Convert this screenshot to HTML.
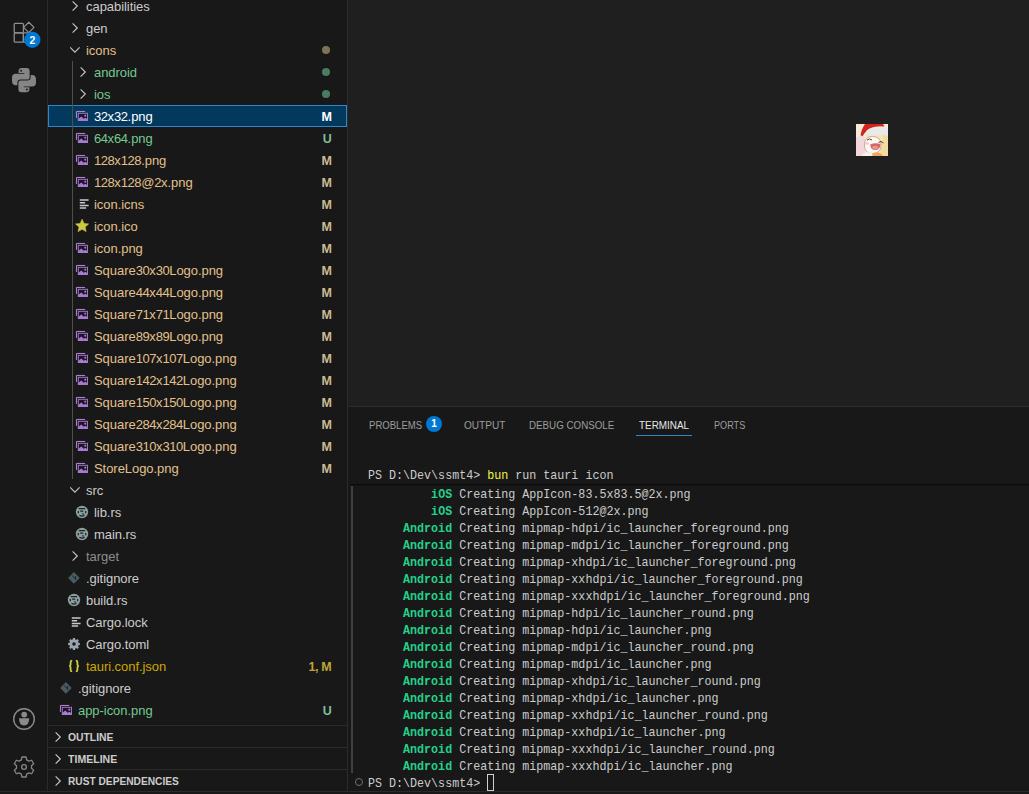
<!DOCTYPE html>
<html><head><meta charset="utf-8"><style>
*{box-sizing:border-box}
html,body{margin:0;padding:0}
body{width:1029px;height:794px;overflow:hidden;background:#181818;position:relative;font-family:"Liberation Sans",sans-serif;}
.abs{position:absolute}
#act{position:absolute;left:0;top:0;width:48px;height:791px;background:#181818;border-right:1px solid #2b2b2b}
#side{position:absolute;left:48px;top:0;width:300px;height:791px;background:#181818;border-right:1px solid #2b2b2b;overflow:hidden}
#editor{position:absolute;left:348px;top:0;width:681px;height:406px;background:#1f1f1f}
#panel{position:absolute;left:348px;top:406px;width:681px;height:385px;background:#181818;border-top:1px solid #2b2b2b;overflow:hidden}
#status{position:absolute;left:0;top:791px;width:1029px;height:3px;background:#181818;border-top:1px solid #2b2b2b}
.row{position:absolute;left:0;width:299px;height:22px}
.row.sel{background:#04395e;outline:1px solid #2f86c9;outline-offset:-1px}
.ic{position:absolute;display:block;line-height:0}
.lb{position:absolute;top:1px;line-height:22px;font-size:13px;letter-spacing:-0.05px;white-space:nowrap}
.lb i{font-style:normal;letter-spacing:-0.45px}
.bd{position:absolute;right:15.5px;top:1px;line-height:22px;font-size:12.5px;font-weight:bold;white-space:nowrap;letter-spacing:-0.3px}
.dot{position:absolute;left:274px;top:7px;width:8px;height:8px;border-radius:50%}
.guide{position:absolute;left:24px;width:1px;background:#4e4e4e}
.sec{position:absolute;left:0;width:299px;height:22px;border-top:1px solid #2b2b2b}
.sec span{position:absolute;left:20px;top:1px;line-height:21px;font-size:11px;font-weight:bold;color:#cccccc;transform-origin:0 0}
.sec svg{position:absolute;left:3px;top:3px}
.tab{position:absolute;transform-origin:0 0;top:411px;line-height:28px;font-size:11px;color:#9d9d9d;white-space:nowrap}
.tl{position:absolute;left:368px;height:17px;line-height:17px;font-family:"Liberation Mono",monospace;font-size:13.5px;transform:scaleX(0.8655);transform-origin:0 0;color:#cccccc;white-space:pre}
.tl b{color:#23d18b}
</style></head><body>
<div id="act">
 <svg class="abs" style="left:0;top:0" width="48" height="100" viewBox="0 0 48 100">
  <g fill="none" stroke="#8f8f8f" stroke-width="1.25" stroke-linejoin="round">
   <rect x="14.2" y="23.4" width="9.2" height="9.4" rx="1"/>
   <rect x="14.2" y="32.8" width="9.2" height="9.4" rx="1"/>
   <rect x="23.4" y="32.8" width="9.2" height="9.4" rx="1"/>
   <path d="M28.8 22.2L34 27.4L28.8 32.6L23.6 27.4Z"/>
  </g>
  <circle cx="32.3" cy="39.8" r="8.1" fill="#0078d4"/>
  <text x="32.3" y="44" font-family="Liberation Sans" font-weight="bold" font-size="10.5" fill="#ffffff" text-anchor="middle">2</text>
  <g fill="#858585">
   <path d="M21.6 68H26.6Q29.6 68 29.6 71V77.4Q29.6 79.6 27.4 79.6H20.5Q17.4 79.6 17.4 82.6V85.3H15.8Q12 85.3 12 80.5V77.8Q12 73.8 15.8 73.8H24.3V73H18.6V71Q18.6 68 21.6 68Z"/>
   <path d="M21.6 68H26.6Q29.6 68 29.6 71V77.4Q29.6 79.6 27.4 79.6H20.5Q17.4 79.6 17.4 82.6V85.3H15.8Q12 85.3 12 80.5V77.8Q12 73.8 15.8 73.8H24.3V73H18.6V71Q18.6 68 21.6 68Z" transform="rotate(180 24 80.1)"/>
  </g>
  <circle cx="21.1" cy="70.7" r="0.95" fill="#181818"/>
  <circle cx="26.9" cy="89.5" r="0.95" fill="#181818"/>
 </svg>
 <svg class="abs" style="left:0;top:690px" width="48" height="100" viewBox="0 690 48 100">
  <circle cx="24" cy="719" r="10.3" fill="none" stroke="#8a8a8a" stroke-width="1.4"/>
  <circle cx="24.2" cy="714.6" r="2.9" fill="#8a8a8a"/>
  <path d="M19 718.3H29.2Q29.2 725.4 24.1 725.4Q19 725.4 19 718.3Z" fill="#8a8a8a"/>
  <path d="M21.32 759.89 L21.97 757.00 L26.03 757.00 L26.68 759.89 L28.82 761.12 L31.64 760.25 L33.67 763.76 L31.50 765.76 L31.50 768.24 L33.67 770.24 L31.64 773.75 L28.82 772.88 L26.68 774.11 L26.03 777.00 L21.97 777.00 L21.32 774.11 L19.18 772.88 L16.36 773.75 L14.33 770.24 L16.50 768.24 L16.50 765.76 L14.33 763.76 L16.36 760.25 L19.18 761.12Z" fill="none" stroke="#858585" stroke-width="1.3" stroke-linejoin="round"/>
  <circle cx="24" cy="767" r="2.4" fill="none" stroke="#858585" stroke-width="1.3"/>
 </svg>
</div>
<div id="side">
<div class="row" style="top:-5px"><span class="ic" style="left:18px;top:3px"><svg width="16" height="16" viewBox="0 0 16 16"><path d="M6.6 3.3L11.3 8L6.6 12.7" fill="none" stroke="#c5c5c5" stroke-width="1.15"/></svg></span><span class="lb" style="left:38px;color:#cccccc">capabilities</span></div>
<div class="row" style="top:17px"><span class="ic" style="left:18px;top:3px"><svg width="16" height="16" viewBox="0 0 16 16"><path d="M6.6 3.3L11.3 8L6.6 12.7" fill="none" stroke="#c5c5c5" stroke-width="1.15"/></svg></span><span class="lb" style="left:38px;color:#cccccc">gen</span></div>
<div class="row" style="top:39px"><span class="ic" style="left:18px;top:3px"><svg width="16" height="16" viewBox="0 0 16 16"><path d="M4.2 5.4L8.9 10.1L13.6 5.4" fill="none" stroke="#c5c5c5" stroke-width="1.15"/></svg></span><span class="lb" style="left:38px;color:#e2c08d">icons</span><span class="dot" style="background:#7d7458"></span></div>
<div class="row" style="top:61px"><span class="ic" style="left:26px;top:3px"><svg width="16" height="16" viewBox="0 0 16 16"><path d="M6.6 3.3L11.3 8L6.6 12.7" fill="none" stroke="#c5c5c5" stroke-width="1.15"/></svg></span><span class="lb" style="left:46px;color:#73c991">android</span><span class="dot" style="background:#4b7c62"></span></div>
<div class="row" style="top:83px"><span class="ic" style="left:26px;top:3px"><svg width="16" height="16" viewBox="0 0 16 16"><path d="M6.6 3.3L11.3 8L6.6 12.7" fill="none" stroke="#c5c5c5" stroke-width="1.15"/></svg></span><span class="lb" style="left:46px;color:#73c991">ios</span><span class="dot" style="background:#4b7c62"></span></div>
<div class="row sel" style="top:105px"><span class="ic" style="left:26px;top:3px"><svg width="16" height="16" viewBox="0 0 16 16"><path d="M2.45 9.9V3.45H11.1" fill="none" stroke="#b48ad8" stroke-width="1"/><rect x="4.3" y="5.3" width="9.2" height="7.1" fill="#1e1628" stroke="#a074c4" stroke-width="1"/><path d="M4 12.9V11.2L7.3 8.6L9.8 10.8L11.5 9.7L13.8 11.5V12.9Z" fill="#a57ad0"/><circle cx="11.3" cy="7.7" r="1.1" fill="#a074c4"/></svg></span><span class="lb" style="left:46px;color:#ffffff"><i>32</i>x<i>32</i>.png</span><span class="bd" style="color:#ffffff">M</span></div>
<div class="row" style="top:127px"><span class="ic" style="left:26px;top:3px"><svg width="16" height="16" viewBox="0 0 16 16"><path d="M2.45 9.9V3.45H11.1" fill="none" stroke="#b48ad8" stroke-width="1"/><rect x="4.3" y="5.3" width="9.2" height="7.1" fill="#1e1628" stroke="#a074c4" stroke-width="1"/><path d="M4 12.9V11.2L7.3 8.6L9.8 10.8L11.5 9.7L13.8 11.5V12.9Z" fill="#a57ad0"/><circle cx="11.3" cy="7.7" r="1.1" fill="#a074c4"/></svg></span><span class="lb" style="left:46px;color:#73c991"><i>64</i>x<i>64</i>.png</span><span class="bd" style="color:#7fbf98">U</span></div>
<div class="row" style="top:149px"><span class="ic" style="left:26px;top:3px"><svg width="16" height="16" viewBox="0 0 16 16"><path d="M2.45 9.9V3.45H11.1" fill="none" stroke="#b48ad8" stroke-width="1"/><rect x="4.3" y="5.3" width="9.2" height="7.1" fill="#1e1628" stroke="#a074c4" stroke-width="1"/><path d="M4 12.9V11.2L7.3 8.6L9.8 10.8L11.5 9.7L13.8 11.5V12.9Z" fill="#a57ad0"/><circle cx="11.3" cy="7.7" r="1.1" fill="#a074c4"/></svg></span><span class="lb" style="left:46px;color:#e2c08d"><i>128</i>x<i>128</i>.png</span><span class="bd" style="color:#cdbb90">M</span></div>
<div class="row" style="top:171px"><span class="ic" style="left:26px;top:3px"><svg width="16" height="16" viewBox="0 0 16 16"><path d="M2.45 9.9V3.45H11.1" fill="none" stroke="#b48ad8" stroke-width="1"/><rect x="4.3" y="5.3" width="9.2" height="7.1" fill="#1e1628" stroke="#a074c4" stroke-width="1"/><path d="M4 12.9V11.2L7.3 8.6L9.8 10.8L11.5 9.7L13.8 11.5V12.9Z" fill="#a57ad0"/><circle cx="11.3" cy="7.7" r="1.1" fill="#a074c4"/></svg></span><span class="lb" style="left:46px;color:#e2c08d"><i>128</i>x<i>128</i>@<i>2</i>x.png</span><span class="bd" style="color:#cdbb90">M</span></div>
<div class="row" style="top:193px"><span class="ic" style="left:26px;top:3px"><svg width="16" height="16" viewBox="0 0 16 16"><path d="M5.8 4H14.6M5.8 6.7H11.1M5.8 9.5H14.6M5.8 12H12.1" stroke="#c8c8c8" stroke-width="1.4"/></svg></span><span class="lb" style="left:46px;color:#e2c08d">icon.icns</span><span class="bd" style="color:#cdbb90">M</span></div>
<div class="row" style="top:215px"><span class="ic" style="left:26px;top:3px"><svg width="16" height="16" viewBox="0 0 16 16"><path d="M8.10 1.20 L9.98 5.46 L14.61 5.93 L11.14 9.04 L12.13 13.59 L8.10 11.25 L4.07 13.59 L5.06 9.04 L1.59 5.93 L6.22 5.46Z" fill="#cbcb41" stroke="#cbcb41" stroke-width="0.6" stroke-linejoin="round"/></svg></span><span class="lb" style="left:46px;color:#e2c08d">icon.ico</span><span class="bd" style="color:#cdbb90">M</span></div>
<div class="row" style="top:237px"><span class="ic" style="left:26px;top:3px"><svg width="16" height="16" viewBox="0 0 16 16"><path d="M2.45 9.9V3.45H11.1" fill="none" stroke="#b48ad8" stroke-width="1"/><rect x="4.3" y="5.3" width="9.2" height="7.1" fill="#1e1628" stroke="#a074c4" stroke-width="1"/><path d="M4 12.9V11.2L7.3 8.6L9.8 10.8L11.5 9.7L13.8 11.5V12.9Z" fill="#a57ad0"/><circle cx="11.3" cy="7.7" r="1.1" fill="#a074c4"/></svg></span><span class="lb" style="left:46px;color:#e2c08d">icon.png</span><span class="bd" style="color:#cdbb90">M</span></div>
<div class="row" style="top:259px"><span class="ic" style="left:26px;top:3px"><svg width="16" height="16" viewBox="0 0 16 16"><path d="M2.45 9.9V3.45H11.1" fill="none" stroke="#b48ad8" stroke-width="1"/><rect x="4.3" y="5.3" width="9.2" height="7.1" fill="#1e1628" stroke="#a074c4" stroke-width="1"/><path d="M4 12.9V11.2L7.3 8.6L9.8 10.8L11.5 9.7L13.8 11.5V12.9Z" fill="#a57ad0"/><circle cx="11.3" cy="7.7" r="1.1" fill="#a074c4"/></svg></span><span class="lb" style="left:46px;color:#e2c08d">Square<i>30</i>x<i>30</i>Logo.png</span><span class="bd" style="color:#cdbb90">M</span></div>
<div class="row" style="top:281px"><span class="ic" style="left:26px;top:3px"><svg width="16" height="16" viewBox="0 0 16 16"><path d="M2.45 9.9V3.45H11.1" fill="none" stroke="#b48ad8" stroke-width="1"/><rect x="4.3" y="5.3" width="9.2" height="7.1" fill="#1e1628" stroke="#a074c4" stroke-width="1"/><path d="M4 12.9V11.2L7.3 8.6L9.8 10.8L11.5 9.7L13.8 11.5V12.9Z" fill="#a57ad0"/><circle cx="11.3" cy="7.7" r="1.1" fill="#a074c4"/></svg></span><span class="lb" style="left:46px;color:#e2c08d">Square<i>44</i>x<i>44</i>Logo.png</span><span class="bd" style="color:#cdbb90">M</span></div>
<div class="row" style="top:303px"><span class="ic" style="left:26px;top:3px"><svg width="16" height="16" viewBox="0 0 16 16"><path d="M2.45 9.9V3.45H11.1" fill="none" stroke="#b48ad8" stroke-width="1"/><rect x="4.3" y="5.3" width="9.2" height="7.1" fill="#1e1628" stroke="#a074c4" stroke-width="1"/><path d="M4 12.9V11.2L7.3 8.6L9.8 10.8L11.5 9.7L13.8 11.5V12.9Z" fill="#a57ad0"/><circle cx="11.3" cy="7.7" r="1.1" fill="#a074c4"/></svg></span><span class="lb" style="left:46px;color:#e2c08d">Square<i>71</i>x<i>71</i>Logo.png</span><span class="bd" style="color:#cdbb90">M</span></div>
<div class="row" style="top:325px"><span class="ic" style="left:26px;top:3px"><svg width="16" height="16" viewBox="0 0 16 16"><path d="M2.45 9.9V3.45H11.1" fill="none" stroke="#b48ad8" stroke-width="1"/><rect x="4.3" y="5.3" width="9.2" height="7.1" fill="#1e1628" stroke="#a074c4" stroke-width="1"/><path d="M4 12.9V11.2L7.3 8.6L9.8 10.8L11.5 9.7L13.8 11.5V12.9Z" fill="#a57ad0"/><circle cx="11.3" cy="7.7" r="1.1" fill="#a074c4"/></svg></span><span class="lb" style="left:46px;color:#e2c08d">Square<i>89</i>x<i>89</i>Logo.png</span><span class="bd" style="color:#cdbb90">M</span></div>
<div class="row" style="top:347px"><span class="ic" style="left:26px;top:3px"><svg width="16" height="16" viewBox="0 0 16 16"><path d="M2.45 9.9V3.45H11.1" fill="none" stroke="#b48ad8" stroke-width="1"/><rect x="4.3" y="5.3" width="9.2" height="7.1" fill="#1e1628" stroke="#a074c4" stroke-width="1"/><path d="M4 12.9V11.2L7.3 8.6L9.8 10.8L11.5 9.7L13.8 11.5V12.9Z" fill="#a57ad0"/><circle cx="11.3" cy="7.7" r="1.1" fill="#a074c4"/></svg></span><span class="lb" style="left:46px;color:#e2c08d">Square<i>107</i>x<i>107</i>Logo.png</span><span class="bd" style="color:#cdbb90">M</span></div>
<div class="row" style="top:369px"><span class="ic" style="left:26px;top:3px"><svg width="16" height="16" viewBox="0 0 16 16"><path d="M2.45 9.9V3.45H11.1" fill="none" stroke="#b48ad8" stroke-width="1"/><rect x="4.3" y="5.3" width="9.2" height="7.1" fill="#1e1628" stroke="#a074c4" stroke-width="1"/><path d="M4 12.9V11.2L7.3 8.6L9.8 10.8L11.5 9.7L13.8 11.5V12.9Z" fill="#a57ad0"/><circle cx="11.3" cy="7.7" r="1.1" fill="#a074c4"/></svg></span><span class="lb" style="left:46px;color:#e2c08d">Square<i>142</i>x<i>142</i>Logo.png</span><span class="bd" style="color:#cdbb90">M</span></div>
<div class="row" style="top:391px"><span class="ic" style="left:26px;top:3px"><svg width="16" height="16" viewBox="0 0 16 16"><path d="M2.45 9.9V3.45H11.1" fill="none" stroke="#b48ad8" stroke-width="1"/><rect x="4.3" y="5.3" width="9.2" height="7.1" fill="#1e1628" stroke="#a074c4" stroke-width="1"/><path d="M4 12.9V11.2L7.3 8.6L9.8 10.8L11.5 9.7L13.8 11.5V12.9Z" fill="#a57ad0"/><circle cx="11.3" cy="7.7" r="1.1" fill="#a074c4"/></svg></span><span class="lb" style="left:46px;color:#e2c08d">Square<i>150</i>x<i>150</i>Logo.png</span><span class="bd" style="color:#cdbb90">M</span></div>
<div class="row" style="top:413px"><span class="ic" style="left:26px;top:3px"><svg width="16" height="16" viewBox="0 0 16 16"><path d="M2.45 9.9V3.45H11.1" fill="none" stroke="#b48ad8" stroke-width="1"/><rect x="4.3" y="5.3" width="9.2" height="7.1" fill="#1e1628" stroke="#a074c4" stroke-width="1"/><path d="M4 12.9V11.2L7.3 8.6L9.8 10.8L11.5 9.7L13.8 11.5V12.9Z" fill="#a57ad0"/><circle cx="11.3" cy="7.7" r="1.1" fill="#a074c4"/></svg></span><span class="lb" style="left:46px;color:#e2c08d">Square<i>284</i>x<i>284</i>Logo.png</span><span class="bd" style="color:#cdbb90">M</span></div>
<div class="row" style="top:435px"><span class="ic" style="left:26px;top:3px"><svg width="16" height="16" viewBox="0 0 16 16"><path d="M2.45 9.9V3.45H11.1" fill="none" stroke="#b48ad8" stroke-width="1"/><rect x="4.3" y="5.3" width="9.2" height="7.1" fill="#1e1628" stroke="#a074c4" stroke-width="1"/><path d="M4 12.9V11.2L7.3 8.6L9.8 10.8L11.5 9.7L13.8 11.5V12.9Z" fill="#a57ad0"/><circle cx="11.3" cy="7.7" r="1.1" fill="#a074c4"/></svg></span><span class="lb" style="left:46px;color:#e2c08d">Square<i>310</i>x<i>310</i>Logo.png</span><span class="bd" style="color:#cdbb90">M</span></div>
<div class="row" style="top:457px"><span class="ic" style="left:26px;top:3px"><svg width="16" height="16" viewBox="0 0 16 16"><path d="M2.45 9.9V3.45H11.1" fill="none" stroke="#b48ad8" stroke-width="1"/><rect x="4.3" y="5.3" width="9.2" height="7.1" fill="#1e1628" stroke="#a074c4" stroke-width="1"/><path d="M4 12.9V11.2L7.3 8.6L9.8 10.8L11.5 9.7L13.8 11.5V12.9Z" fill="#a57ad0"/><circle cx="11.3" cy="7.7" r="1.1" fill="#a074c4"/></svg></span><span class="lb" style="left:46px;color:#e2c08d">StoreLogo.png</span><span class="bd" style="color:#cdbb90">M</span></div>
<div class="row" style="top:479px"><span class="ic" style="left:18px;top:3px"><svg width="16" height="16" viewBox="0 0 16 16"><path d="M4.2 5.4L8.9 10.1L13.6 5.4" fill="none" stroke="#c5c5c5" stroke-width="1.15"/></svg></span><span class="lb" style="left:38px;color:#cccccc">src</span></div>
<div class="row" style="top:501px"><span class="ic" style="left:26px;top:3px"><svg width="16" height="16" viewBox="0 0 16 16"><circle cx="8" cy="8" r="6.2" fill="#8b9d9d"/><path d="M4.8 4.6H11.2M4.3 6.9V9.3M11.7 6.9V9.3M5.4 11.3Q8 12.8 10.6 11.3M6.2 7.2H9.2M8.6 9.2L9.4 10.6" fill="none" stroke="#1c2426" stroke-width="1.25"/></svg></span><span class="lb" style="left:46px;color:#cccccc">lib.rs</span></div>
<div class="row" style="top:523px"><span class="ic" style="left:26px;top:3px"><svg width="16" height="16" viewBox="0 0 16 16"><circle cx="8" cy="8" r="6.2" fill="#8b9d9d"/><path d="M4.8 4.6H11.2M4.3 6.9V9.3M11.7 6.9V9.3M5.4 11.3Q8 12.8 10.6 11.3M6.2 7.2H9.2M8.6 9.2L9.4 10.6" fill="none" stroke="#1c2426" stroke-width="1.25"/></svg></span><span class="lb" style="left:46px;color:#cccccc">main.rs</span></div>
<div class="row" style="top:545px"><span class="ic" style="left:18px;top:3px"><svg width="16" height="16" viewBox="0 0 16 16"><path d="M6.6 3.3L11.3 8L6.6 12.7" fill="none" stroke="#c5c5c5" stroke-width="1.15"/></svg></span><span class="lb" style="left:38px;color:#8c8c8c">target</span></div>
<div class="row" style="top:567px"><span class="ic" style="left:18px;top:3px"><svg width="16" height="16" viewBox="0 0 16 16"><path d="M7.9 2.1L13.7 7.9L7.9 13.7L2.1 7.9Z" fill="#4a5a62"/><path d="M6 5.4L9.6 9M9.6 6.2V10" stroke="#1c2428" stroke-width="1"/></svg></span><span class="lb" style="left:38px;color:#cccccc">.gitignore</span></div>
<div class="row" style="top:589px"><span class="ic" style="left:18px;top:3px"><svg width="16" height="16" viewBox="0 0 16 16"><circle cx="8" cy="8" r="6.2" fill="#8b9d9d"/><path d="M4.8 4.6H11.2M4.3 6.9V9.3M11.7 6.9V9.3M5.4 11.3Q8 12.8 10.6 11.3M6.2 7.2H9.2M8.6 9.2L9.4 10.6" fill="none" stroke="#1c2426" stroke-width="1.25"/></svg></span><span class="lb" style="left:38px;color:#cccccc">build.rs</span></div>
<div class="row" style="top:611px"><span class="ic" style="left:18px;top:3px"><svg width="16" height="16" viewBox="0 0 16 16"><path d="M5.8 4H14.6M5.8 6.7H11.1M5.8 9.5H14.6M5.8 12H12.1" stroke="#c8c8c8" stroke-width="1.4"/></svg></span><span class="lb" style="left:38px;color:#cccccc">Cargo.lock</span></div>
<div class="row" style="top:633px"><span class="ic" style="left:18px;top:3px"><svg width="16" height="16" viewBox="0 0 16 16"><path d="M6.64 3.61 L6.98 2.09 L9.02 2.09 L9.36 3.61 L10.15 3.93 L11.46 3.10 L12.90 4.54 L12.07 5.85 L12.39 6.64 L13.91 6.98 L13.91 9.02 L12.39 9.36 L12.07 10.15 L12.90 11.46 L11.46 12.90 L10.15 12.07 L9.36 12.39 L9.02 13.91 L6.98 13.91 L6.64 12.39 L5.85 12.07 L4.54 12.90 L3.10 11.46 L3.93 10.15 L3.61 9.36 L2.09 9.02 L2.09 6.98 L3.61 6.64 L3.93 5.85 L3.10 4.54 L4.54 3.10 L5.85 3.93Z" fill="#9aa5aa"/><circle cx="8" cy="8" r="1.8" fill="#1f1830"/></svg></span><span class="lb" style="left:38px;color:#cccccc">Cargo.toml</span></div>
<div class="row" style="top:655px"><span class="ic" style="left:18px;top:3px"><svg width="16" height="16" viewBox="0 0 16 16"><path d="M6.2 2.6Q4.6 2.6 4.6 4V6.6Q4.6 7.9 3.2 8Q4.6 8.1 4.6 9.4V12Q4.6 13.4 6.2 13.4M9.8 2.6Q11.4 2.6 11.4 4V6.6Q11.4 7.9 12.8 8Q11.4 8.1 11.4 9.4V12Q11.4 13.4 9.8 13.4" fill="none" stroke="#cbcb41" stroke-width="1.8"/></svg></span><span class="lb" style="left:38px;color:#cca700">tauri.conf.json</span><span class="bd" style="color:#bfa43a">1, M</span></div>
<div class="row" style="top:677px"><span class="ic" style="left:10px;top:3px"><svg width="16" height="16" viewBox="0 0 16 16"><path d="M7.9 2.1L13.7 7.9L7.9 13.7L2.1 7.9Z" fill="#4a5a62"/><path d="M6 5.4L9.6 9M9.6 6.2V10" stroke="#1c2428" stroke-width="1"/></svg></span><span class="lb" style="left:30px;color:#cccccc">.gitignore</span></div>
<div class="row" style="top:699px"><span class="ic" style="left:10px;top:3px"><svg width="16" height="16" viewBox="0 0 16 16"><path d="M2.45 9.9V3.45H11.1" fill="none" stroke="#b48ad8" stroke-width="1"/><rect x="4.3" y="5.3" width="9.2" height="7.1" fill="#1e1628" stroke="#a074c4" stroke-width="1"/><path d="M4 12.9V11.2L7.3 8.6L9.8 10.8L11.5 9.7L13.8 11.5V12.9Z" fill="#a57ad0"/><circle cx="11.3" cy="7.7" r="1.1" fill="#a074c4"/></svg></span><span class="lb" style="left:30px;color:#73c991">app-icon.png</span><span class="bd" style="color:#7fbf98">U</span></div>
<div class="guide" style="top:61px;height:418px"></div>
<div class="sec" style="top:725px"><svg width="16" height="16" viewBox="0 0 16 16"><path d="M4.6 3.3L9.3 8L4.6 12.7" fill="none" stroke="#c5c5c5" stroke-width="1.15"/></svg><span style="transform:scaleX(0.94)">OUTLINE</span></div>
<div class="sec" style="top:747px"><svg width="16" height="16" viewBox="0 0 16 16"><path d="M4.6 3.3L9.3 8L4.6 12.7" fill="none" stroke="#c5c5c5" stroke-width="1.15"/></svg><span style="transform:scaleX(0.96)">TIMELINE</span></div>
<div class="sec" style="top:769px"><svg width="16" height="16" viewBox="0 0 16 16"><path d="M4.6 3.3L9.3 8L4.6 12.7" fill="none" stroke="#c5c5c5" stroke-width="1.15"/></svg><span style="transform:scaleX(0.925)">RUST DEPENDENCIES</span></div>
</div>
<div id="editor">
 <svg class="abs" style="left:508px;top:124px" width="32" height="32" viewBox="0 0 32 32">
  <rect width="32" height="32" fill="#f7ecd6"/>
  <path d="M0 13H9V32H0Z" fill="#f3d6da"/>
  <path d="M25 9H32V32H24Z" fill="#f3dca2"/>
  <path d="M10 10H27V17H10Z" fill="#f6e4b4"/>
  <path d="M9 0H27L28.5 2.5Q19 2 13 5Q9 8 6 13L4.5 11Q6 4 9 0Z" fill="#d42420"/>
  <path d="M10 7Q15 2.5 23 2.5Q30 2.5 32 5V12Q24 9.5 14 12.5Q10 11 10 7Z" fill="#e9e9e9"/>
  <circle cx="4.5" cy="14" r="2.4" fill="#e4e2e2"/>
  <path d="M8.5 21Q8.5 12.5 16.5 12.5Q25 12.5 25 21Q25 29.5 16.5 29.5Q8.5 29.5 8.5 21Z" fill="#fff8f2" stroke="#a08470" stroke-width="0.6"/>
  <ellipse cx="11" cy="19.5" rx="1.8" ry="1.3" fill="#f6c6c6"/>
  <path d="M11 16.2Q13.5 13.8 16 16M22.5 18.5Q25 16.2 27.5 19" fill="none" stroke="#5a4034" stroke-width="1"/>
  <path d="M14.2 20.5Q19 18.5 24.5 20Q24 26 19.5 26Q14.5 26 14.2 20.5Z" fill="#d06a68"/>
  <ellipse cx="19.3" cy="23.5" rx="3" ry="1.7" fill="#ec9490"/>
  <path d="M16 32Q17 28 21 28.5Q25 28 27 32Z" fill="#f2a45c"/>
  <path d="M6 32Q8 27.5 16 28.5V32Z" fill="#f8f3f0"/>
 </svg>
</div>
<div id="panel"></div>
<div class="tab" style="left:368.6px;transform:scaleX(0.870)">PROBLEMS</div>
<div class="abs" style="left:426px;top:416px;width:16px;height:16px;border-radius:50%;background:#0078d4;color:#fff;font-size:10px;font-weight:bold;text-align:center;line-height:16px">1</div>
<div class="tab" style="left:463.6px;transform:scaleX(0.916)">OUTPUT</div>
<div class="tab" style="left:528.9px;transform:scaleX(0.889)">DEBUG CONSOLE</div>
<div class="tab" style="left:639px;color:#e7e7e7;transform:scaleX(0.90)">TERMINAL</div>
<div class="abs" style="left:636px;top:435px;width:56px;height:1px;background:#2f86c9"></div>
<div class="tab" style="left:714px;transform:scaleX(0.83)">PORTS</div>
<div class="tl" style="top:467px">PS D:\Dev\ssmt4&gt; <span style="color:#f5f543">bun</span> run tauri icon</div>
<div class="tl" style="top:486px">         <b>iOS</b> Creating AppIcon-83.5x83.5@2x.png</div>
<div class="tl" style="top:503px">         <b>iOS</b> Creating AppIcon-512@2x.png</div>
<div class="tl" style="top:520px">     <b>Android</b> Creating mipmap-hdpi/ic_launcher_foreground.png</div>
<div class="tl" style="top:537px">     <b>Android</b> Creating mipmap-mdpi/ic_launcher_foreground.png</div>
<div class="tl" style="top:554px">     <b>Android</b> Creating mipmap-xhdpi/ic_launcher_foreground.png</div>
<div class="tl" style="top:571px">     <b>Android</b> Creating mipmap-xxhdpi/ic_launcher_foreground.png</div>
<div class="tl" style="top:588px">     <b>Android</b> Creating mipmap-xxxhdpi/ic_launcher_foreground.png</div>
<div class="tl" style="top:605px">     <b>Android</b> Creating mipmap-hdpi/ic_launcher_round.png</div>
<div class="tl" style="top:622px">     <b>Android</b> Creating mipmap-hdpi/ic_launcher.png</div>
<div class="tl" style="top:639px">     <b>Android</b> Creating mipmap-mdpi/ic_launcher_round.png</div>
<div class="tl" style="top:656px">     <b>Android</b> Creating mipmap-mdpi/ic_launcher.png</div>
<div class="tl" style="top:673px">     <b>Android</b> Creating mipmap-xhdpi/ic_launcher_round.png</div>
<div class="tl" style="top:690px">     <b>Android</b> Creating mipmap-xhdpi/ic_launcher.png</div>
<div class="tl" style="top:707px">     <b>Android</b> Creating mipmap-xxhdpi/ic_launcher_round.png</div>
<div class="tl" style="top:724px">     <b>Android</b> Creating mipmap-xxhdpi/ic_launcher.png</div>
<div class="tl" style="top:741px">     <b>Android</b> Creating mipmap-xxxhdpi/ic_launcher_round.png</div>
<div class="tl" style="top:758px">     <b>Android</b> Creating mipmap-xxxhdpi/ic_launcher.png</div>
<div class="tl" style="top:775px">PS D:\Dev\ssmt4&gt; </div>
<div class="abs" style="left:350px;top:484px;width:679px;height:1px;background:#0b0b0b"></div>
<div class="abs" style="left:350px;top:485px;width:679px;height:1px;background:#131313"></div>
<div class="abs" style="left:351px;top:486px;width:2px;height:287px;background:#404040"></div>
<div class="abs" style="left:355px;top:777.5px;width:8px;height:8px;border-radius:50%;border:1.6px solid #6e6e6e"></div>
<div class="abs" style="left:487px;top:774px;width:7px;height:17px;border:1px solid #d0d0d0"></div>
<div id="status"></div>
</body></html>
